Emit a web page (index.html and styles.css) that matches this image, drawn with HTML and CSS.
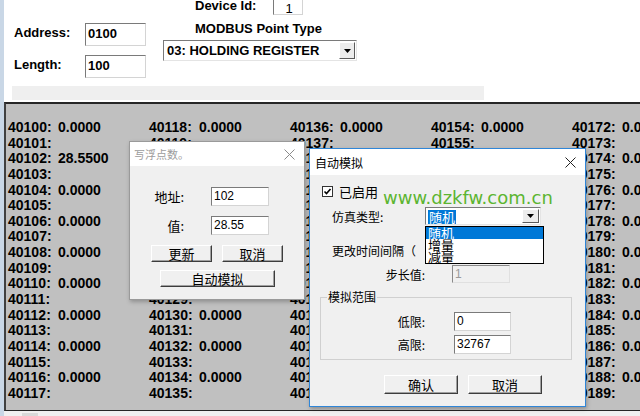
FILE: index.html
```html
<!DOCTYPE html>
<html lang="zh-CN">
<head>
    <meta charset="UTF-8">
    <title>Modbus Slave</title>
    <link rel="stylesheet" href="styles.css">
</head>
<body>
    <div class="window">
        <!-- Connection setup -->
        <div class="setup">
            <div class="setup-left">
                <div class="field"><label>Address:</label><div class="textbox">0100</div></div>
                <div class="field"><label>Length:</label><div class="textbox">100</div></div>
            </div>
            <div class="setup-right">
                <div class="device-row"><label>Device Id:</label><div class="textbox device-box">1</div></div>
                <div class="point-type">MODBUS Point Type</div>
                <div class="combo type-combo">
                    <span class="combo-text">03: HOLDING REGISTER</span>
                    <span class="combo-btn"><svg width="7" height="4" viewBox="0 0 7 4"><polygon points="0,0 7,0 3.5,4" fill="#000"/></svg></span>
                </div>
            </div>
        </div>
        <div class="status-bar"></div>

        <!-- Register table -->
        <div class="registers" id="registers"></div>
        <div class="bottom-strip"><span class="scroll-thumb"></span></div>
    </div>

    <!-- Write float dialog -->
    <div class="dialog float-dialog">
        <div class="titlebar">
            <span>写浮点数。</span>
            <svg class="close" width="11" height="11" viewBox="0 0 11 11"><path d="M0.5 0.5L10.5 10.5M10.5 0.5L0.5 10.5" stroke="#8a8a8a" stroke-width="1"/></svg>
        </div>
        <div class="float-body">
            <div class="float-row"><label>地址:</label><div class="textbox small">102</div></div>
            <div class="float-row"><label>值:</label><div class="textbox small">28.55</div></div>
            <div class="float-buttons">
                <button class="btn">更新</button>
                <button class="btn">取消</button>
            </div>
            <button class="btn auto-btn">自动模拟</button>
        </div>
    </div>

    <!-- Auto simulation dialog -->
    <div class="dialog sim-dialog">
        <div class="titlebar">
            <span>自动模拟</span>
            <svg class="close" width="11" height="11" viewBox="0 0 11 11"><path d="M0.5 0.5L10.5 10.5M10.5 0.5L0.5 10.5" stroke="#222" stroke-width="1"/></svg>
        </div>
        <div class="sim-body">
            <div class="check-row">
                <span class="checkbox"><svg width="9" height="9" viewBox="0 0 9 9"><polyline points="1.5,4.5 3.5,6.5 7.5,2" fill="none" stroke="#000" stroke-width="1.6"/></svg></span>
                <span>已启用</span>
            </div>
            <div class="sim-row type-row">
                <label>仿真类型:</label>
                <div class="combo sim-combo">
                    <span class="combo-text"><span class="selected">随机</span></span>
                    <span class="combo-btn"><svg width="7" height="4" viewBox="0 0 7 4"><polygon points="0,0 7,0 3.5,4" fill="#000"/></svg></span>
                </div>
            </div>
            <div class="interval-row">更改时间间隔（</div>
            <div class="sim-row step-row">
                <label>步长值:</label>
                <div class="textbox small disabled">1</div>
            </div>
            <div class="group">
                <span class="group-caption">模拟范围</span>
                <div class="range-row"><label>低限:</label><div class="textbox small">0</div></div>
                <div class="range-row"><label>高限:</label><div class="textbox small">32767</div></div>
            </div>
            <div class="sim-buttons">
                <button class="btn wide">确认</button>
                <button class="btn wide">取消</button>
            </div>
        </div>

        <div class="watermark">www.dzkfw.com.cn</div>

        <ul class="dropdown">
            <li class="active">随机</li>
            <li>增量</li>
            <li>减量</li>
        </ul>
    </div>

    <script>
        // 40100..40189, 18 rows per column
        const registers = document.getElementById('registers');
        for (let i = 0; i < 90; i++) {
            const cell = document.createElement('div');
            cell.className = 'reg';
            let value = '';
            if (i % 2 === 0) value = i === 2 ? '28.5500' : '0.0000';
            cell.innerHTML = '<span class="addr">' + (40100 + i) + ':</span><span class="val">' + value + '</span>';
            registers.appendChild(cell);
        }
    </script>
</body>
</html>
```

FILE: styles.css
```css
/* Page */
body {
    margin: 0;
    width: 640px;
    height: 416px;
    overflow: hidden;
    position: relative;
    background: #fff;
    font-family: "Liberation Sans", Arial, sans-serif;
    color: #000;
}

.window {
    height: 416px;
    box-sizing: border-box;
    border-left: 4px solid #c9d7e6;
    display: flex;
    flex-direction: column;
}

/* Setup area */
.setup {
    height: 86px;
    display: flex;
    padding-left: 10px;
    font-size: 13px;
    font-weight: bold;
}

.setup-left {
    width: 149px;
    padding-top: 23px;
    display: flex;
    flex-direction: column;
    gap: 9px;
}

.field {
    display: flex;
    align-items: center;
}

.field label {
    width: 71px;
    padding-bottom: 4px;
}

.textbox {
    box-sizing: border-box;
    background: #fff;
    border: 1px solid;
    border-color: #7a7a7a #d4d4d4 #d4d4d4 #7a7a7a;
    padding-left: 2px;
}

.field .textbox {
    width: 61px;
    height: 23px;
    line-height: 19px;
}

.setup-right {
    width: 194px;
    display: flex;
    flex-direction: column;
}

.device-row {
    margin-top: -7px;
    height: 22px;
    display: flex;
}

.device-row label {
    width: 78px;
    padding-left: 32px;
    padding-top: 6px;
    line-height: 13px;
}

.device-box {
    width: 30px;
    height: 22px;
    text-align: center;
    line-height: 30px;
    font-weight: normal;
}

.point-type {
    margin-top: 6px;
    padding-left: 32px;
    line-height: 15px;
}

.combo {
    box-sizing: border-box;
    display: flex;
    align-items: center;
    background: #fff;
    border: 1px solid;
    border-color: #7a7a7a #e4e4e4 #e4e4e4 #7a7a7a;
}

.combo-text {
    flex: 1;
}

.combo-btn {
    box-sizing: border-box;
    display: flex;
    align-items: center;
    justify-content: center;
    background: #ececec;
    border: 1px solid;
    border-color: #fff #5a5a5a #5a5a5a #fff;
}

.type-combo {
    margin-top: 4px;
    width: 194px;
    height: 21px;
    padding: 1px 1px 1px 3px;
}

.type-combo .combo-btn {
    width: 16px;
    height: 17px;
}

.status-bar {
    margin-left: 8px;
    width: 472px;
    height: 14px;
    background: #efefef;
}

/* Register table */
.registers {
    margin-top: 2px;
    height: 309px;
    box-sizing: border-box;
    background: #c0c0c0;
    border-top: 2px solid #262626;
    border-left: 2px solid #404040;
    border-bottom: 1px solid #262626;
    padding: 16px 0 0 2px;
    display: grid;
    grid-auto-flow: column;
    grid-template-rows: repeat(18, 15.65px);
    grid-auto-columns: 141px;
    overflow: hidden;
    font-size: 14px;
    font-weight: bold;
    line-height: 15.65px;
    white-space: nowrap;
}

.reg {
    display: flex;
}

.reg .addr {
    width: 50px;
}

.bottom-strip {
    flex: 1;
    background: #f0f0f0;
    padding-left: 18px;
}

.scroll-thumb {
    display: block;
    width: 16px;
    height: 100%;
    margin-top: 2px;
    background: #d9d9d9;
}

/* Dialogs */
.dialog {
    position: absolute;
    box-sizing: border-box;
    background: #f0f0f0;
    font-family: "Noto Sans CJK SC", "Liberation Sans", sans-serif;
    font-size: 12px;
    box-shadow: 1px 2px 4px rgba(0, 0, 0, 0.25);
}

.titlebar {
    background: #fff;
    display: flex;
    justify-content: space-between;
    align-items: center;
    padding: 0 9px 0 4px;
}

.close {
    display: block;
}

.textbox.small {
    width: 58px;
    height: 19px;
    font-family: "Liberation Sans", Arial, sans-serif;
    font-size: 12px;
    line-height: 17px;
}

.textbox.disabled {
    background: #f0f0f0;
    color: #9a9a9a;
    border-color: #8a8a8a #e0e0e0 #e0e0e0 #8a8a8a;
}

.btn {
    box-sizing: border-box;
    margin: 0;
    padding: 0;
    background: #f0f0f0;
    border: 1px solid;
    border-color: #fff #3c3c3c #3c3c3c #fff;
    box-shadow: inset -1px -1px #a0a0a0;
    font-family: "Noto Sans CJK SC", sans-serif;
    font-size: 13px;
    line-height: 15px;
    color: #000;
}

/* Write float dialog */
.float-dialog {
    left: 129px;
    top: 141px;
    width: 176px;
    height: 159px;
    border: 1px solid #9a9a9a;
}

.float-dialog .titlebar {
    height: 24px;
    color: #9c9c9c;
    font-size: 11px;
}

.float-body {
    padding-top: 21px;
}

.float-row {
    display: flex;
    align-items: center;
    margin-bottom: 10px;
}

.float-row label {
    width: 54px;
    text-align: right;
    font-size: 13px;
}

.float-row .textbox {
    margin-left: 27px;
}

.float-buttons {
    display: flex;
    gap: 10px;
    padding-left: 21px;
    margin-top: 9px;
}

.float-buttons .btn {
    width: 61px;
    height: 17px;
}

.auto-btn {
    display: block;
    margin: 8px 0 0 30px;
    width: 115px;
    height: 17px;
}

/* Auto simulation dialog */
.sim-dialog {
    left: 309px;
    top: 148px;
    width: 277px;
    height: 259px;
    border: 1px solid #2f86d8;
}

.sim-dialog .titlebar {
    height: 26px;
    padding-left: 5px;
}

.check-row {
    margin: 10px 0 0 12px;
    height: 12px;
    display: flex;
    align-items: center;
    gap: 6px;
    font-size: 13px;
}

.checkbox {
    width: 11px;
    height: 11px;
    box-sizing: border-box;
    border: 1px solid #333;
    background: #fff;
    display: flex;
    align-items: center;
    justify-content: center;
}

.sim-row {
    display: flex;
    align-items: center;
    padding-left: 22px;
}

.sim-row label {
    width: 93px;
}

.type-row {
    margin-top: 10px;
}

.sim-combo {
    width: 116px;
    height: 18px;
    padding: 1px 1px 1px 2px;
}

.sim-combo .selected {
    background: #0078d7;
    color: #fff;
    padding: 0 1px;
    font-size: 13px;
    line-height: 14px;
    display: inline-block;
}

.sim-combo .combo-btn {
    width: 17px;
    height: 14px;
}

.interval-row {
    margin-top: 18px;
    padding-left: 22px;
    line-height: 16px;
}

.step-row {
    margin-top: 6px;
}

.step-row label {
    text-align: right;
}

.step-row .textbox {
    margin-left: 27px;
    height: 18px;
}

.group {
    position: relative;
    margin: 14px 0 0 10px;
    width: 252px;
    height: 63px;
    box-sizing: border-box;
    border: 1px solid #d0d0d0;
    padding-top: 14px;
}

.group-caption {
    position: absolute;
    left: 6px;
    top: -9px;
    padding: 0 1px;
    background: #f0f0f0;
    line-height: 16px;
}

.range-row {
    display: flex;
    align-items: center;
    margin-bottom: 4px;
}

.range-row label {
    width: 104px;
    text-align: right;
}

.range-row .textbox {
    margin-left: 29px;
    width: 57px;
}

.sim-buttons {
    display: flex;
    gap: 10px;
    margin: 15px 0 0 74px;
}

.btn.wide {
    width: 74px;
    height: 19px;
}

.watermark {
    position: absolute;
    left: 73px;
    top: 40px;
    font-family: "DejaVu Sans", sans-serif;
    font-size: 18px;
    line-height: 18px;
    color: #5cb531;
}

.dropdown {
    position: absolute;
    left: 115px;
    top: 77px;
    width: 119px;
    margin: 0;
    padding: 0;
    list-style: none;
    box-sizing: border-box;
    background: #fff;
    border: 1px solid #000;
    font-size: 13px;
    line-height: 12px;
}

.dropdown li {
    height: 12px;
    padding-left: 2px;
}

.dropdown li.active {
    background: #0078d7;
    color: #fff;
}
```
